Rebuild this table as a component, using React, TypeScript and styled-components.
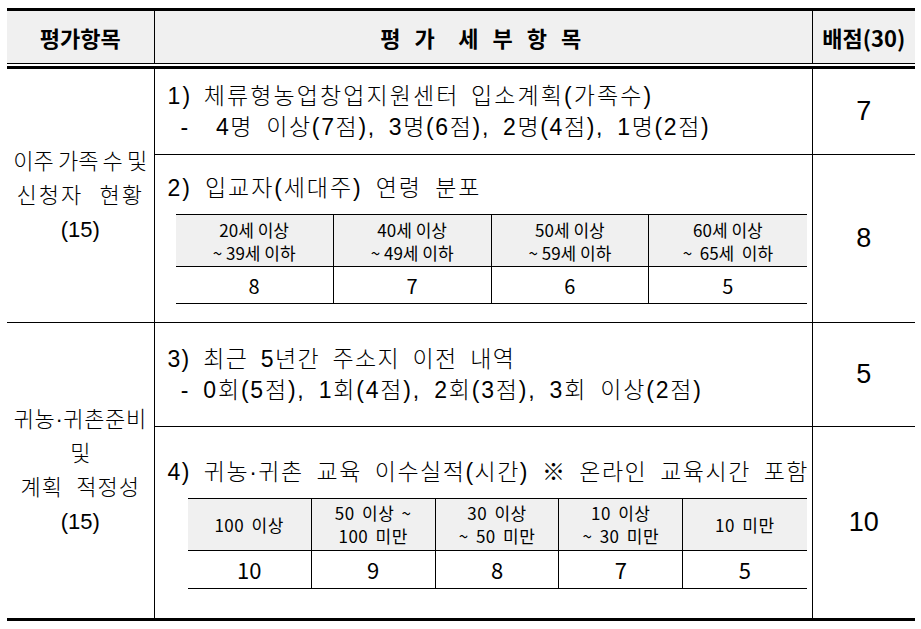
import styled, { createGlobalStyle } from "styled-components";

const GlobalStyle = createGlobalStyle`
  html, body {
    margin: 0;
    background: #fff;
  }
`;

const BODY = `"Liberation Sans", "Noto Sans CJK KR", sans-serif`;
const SANS = `"Noto Sans CJK KR", sans-serif`;

const Page = styled.div`
  padding: 8px 0 0 7px;
  color: #000;
  font-family: ${BODY};
`;

const ScoreTable = styled.table`
  width: 908px;
  border-collapse: collapse;
  table-layout: fixed;
`;

const HeadCell = styled.th<{ $mid?: boolean; $ls?: number }>`
  height: 52px;
  padding: 0;
  background: #f0f0f0;
  border-top: 3px solid #000;
  border-left: ${(p) => (p.$mid ? "1px solid #000" : "none")};
  border-right: ${(p) => (p.$mid ? "1px solid #000" : "none")};
  font-family: ${SANS};
  font-size: 22px;
  font-weight: 700;
  letter-spacing: ${(p) => p.$ls ?? 0}px;
  white-space: pre;
  text-align: center;
`;

const SepCell = styled.td`
  height: 2px;
  padding: 0;
  border-top: 1px solid #000;
  border-bottom: 3px solid #000;
`;

const CategoryCell = styled.td<{ $last?: boolean }>`
  padding: 0;
  text-align: center;
  vertical-align: middle;
  border-bottom: ${(p) => (p.$last ? "3px" : "1px")} solid #000;
  font-size: 22px;
  font-weight: 300;
  line-height: 34px;
  white-space: pre;
`;

const CategoryLine = styled.div<{ $ls?: number; $ws?: number }>`
  letter-spacing: ${(p) => p.$ls ?? 0}px;
  word-spacing: ${(p) => p.$ws ?? 0}px;
`;

const DetailCell = styled.td<{ $h: number; $last?: boolean }>`
  height: ${(p) => p.$h}px;
  padding: 0 0 0 13px;
  vertical-align: middle;
  border-left: 1px solid #000;
  border-right: 1px solid #000;
  border-bottom: ${(p) => (p.$last ? "3px" : "1px")} solid #000;
`;

const ScoreCell = styled.td<{ $last?: boolean }>`
  padding: 0;
  text-align: center;
  vertical-align: middle;
  border-bottom: ${(p) => (p.$last ? "3px" : "1px")} solid #000;
  font-size: 27px;
`;

const Line = styled.div<{ $ls?: number; $ws?: number }>`
  font-size: 23px;
  font-weight: 300;
  line-height: 31px;
  white-space: pre;
  letter-spacing: ${(p) => p.$ls ?? 0}px;
  word-spacing: ${(p) => p.$ws ?? 0}px;
`;

const Title = styled(Line)`
  margin-bottom: 10px;
`;

const SubTable = styled.table<{ $indent: number; $width: number }>`
  margin-left: ${(p) => p.$indent}px;
  width: ${(p) => p.$width}px;
  border-collapse: collapse;
  table-layout: fixed;
  border-top: 1px solid #000;
  border-bottom: 1px solid #000;
`;

const SubHead = styled.th<{ $ls?: number; $ws?: number }>`
  height: 51px;
  padding: 0;
  background: #f0f0f0;
  border-bottom: 1px solid #000;
  border-left: 1px solid #000;
  font-family: ${SANS};
  font-size: 17px;
  font-weight: 400;
  line-height: 23px;
  letter-spacing: ${(p) => p.$ls ?? 0}px;
  word-spacing: ${(p) => p.$ws ?? 0}px;
  white-space: pre;
  text-align: center;
  &:first-child {
    border-left: none;
  }
`;

const SubValue = styled.td<{ $size: number; $h: number }>`
  height: ${(p) => p.$h}px;
  padding: 0;
  border-left: 1px solid #000;
  font-family: ${SANS};
  font-size: ${(p) => p.$size}px;
  text-align: center;
  &:first-child {
    border-left: none;
  }
`;

const ageHeads = [
  "20세 이상\n~ 39세 이하",
  "40세 이상\n~ 49세 이하",
  "50세 이상\n~ 59세 이하",
  "60세 이상\n~  65세  이하",
];
const ageScores = ["8", "7", "6", "5"];

const eduHeads = [
  "100 이상",
  "50 이상 ~\n100 미만",
  "30 이상\n~ 50 미만",
  "10 이상\n~ 30 미만",
  "10 미만",
];
const eduScores = ["10", "9", "8", "7", "5"];

export default function App() {
  return (
    <Page>
      <GlobalStyle />
      <ScoreTable>
        <colgroup>
          <col style={{ width: 147 }} />
          <col style={{ width: 658 }} />
          <col style={{ width: 103 }} />
        </colgroup>
        <thead>
          <tr>
            <HeadCell>평가항목</HeadCell>
            <HeadCell $mid $ls={4.5}>
              {"평 가  세 부 항 목"}
            </HeadCell>
            <HeadCell>배점(30)</HeadCell>
          </tr>
          <tr>
            <SepCell colSpan={3} />
          </tr>
        </thead>
        <tbody>
          <tr>
            <CategoryCell rowSpan={2}>
              <CategoryLine $ws={-2}>이주 가족 수 및</CategoryLine>
              <CategoryLine $ls={2} $ws={8}>
                신청자 현황
              </CategoryLine>
              <CategoryLine>(15)</CategoryLine>
            </CategoryCell>
            <DetailCell $h={85}>
              <Line $ls={2.1} $ws={3}>
                1) 체류형농업창업지원센터 입소계획(가족수)
              </Line>
              <Line $ls={1.65} $ws={5}>
                {" -  4명 이상(7점), 3명(6점), 2명(4점), 1명(2점)"}
              </Line>
            </DetailCell>
            <ScoreCell>7</ScoreCell>
          </tr>
          <tr>
            <DetailCell $h={167}>
              <Title $ls={1.9} $ws={5}>
                2) 입교자(세대주) 연령 분포
              </Title>
              <SubTable $indent={8} $width={631}>
                <thead>
                  <tr>
                    {ageHeads.map((h) => (
                      <SubHead key={h}>{h}</SubHead>
                    ))}
                  </tr>
                </thead>
                <tbody>
                  <tr>
                    {ageScores.map((s, i) => (
                      <SubValue key={i} $size={20} $h={36}>
                        {s}
                      </SubValue>
                    ))}
                  </tr>
                </tbody>
              </SubTable>
            </DetailCell>
            <ScoreCell>8</ScoreCell>
          </tr>
          <tr>
            <CategoryCell rowSpan={2} $last>
              <CategoryLine $ls={0.6}>귀농·귀촌준비</CategoryLine>
              <CategoryLine>및</CategoryLine>
              <CategoryLine $ls={1} $ws={6}>
                계획 적정성
              </CategoryLine>
              <CategoryLine>(15)</CategoryLine>
            </CategoryCell>
            <DetailCell $h={103}>
              <Line $ls={1.3} $ws={5}>
                3) 최근 5년간 주소지 이전 내역
              </Line>
              <Line $ls={1.8} $ws={5}>
                {" - 0회(5점), 1회(4점), 2회(3점), 3회 이상(2점)"}
              </Line>
            </DetailCell>
            <ScoreCell>5</ScoreCell>
          </tr>
          <tr>
            <DetailCell $h={191} $last>
              <Title $ls={1.5} $ws={5}>
                4) 귀농·귀촌 교육 이수실적(시간) ※ 온라인 교육시간 포함
              </Title>
              <SubTable $indent={20} $width={619}>
                <thead>
                  <tr>
                    {eduHeads.map((h) => (
                      <SubHead key={h} $ls={0.5} $ws={3}>
                        {h}
                      </SubHead>
                    ))}
                  </tr>
                </thead>
                <tbody>
                  <tr>
                    {eduScores.map((s, i) => (
                      <SubValue key={i} $size={22} $h={37}>
                        {s}
                      </SubValue>
                    ))}
                  </tr>
                </tbody>
              </SubTable>
            </DetailCell>
            <ScoreCell $last>10</ScoreCell>
          </tr>
        </tbody>
      </ScoreTable>
    </Page>
  );
}
